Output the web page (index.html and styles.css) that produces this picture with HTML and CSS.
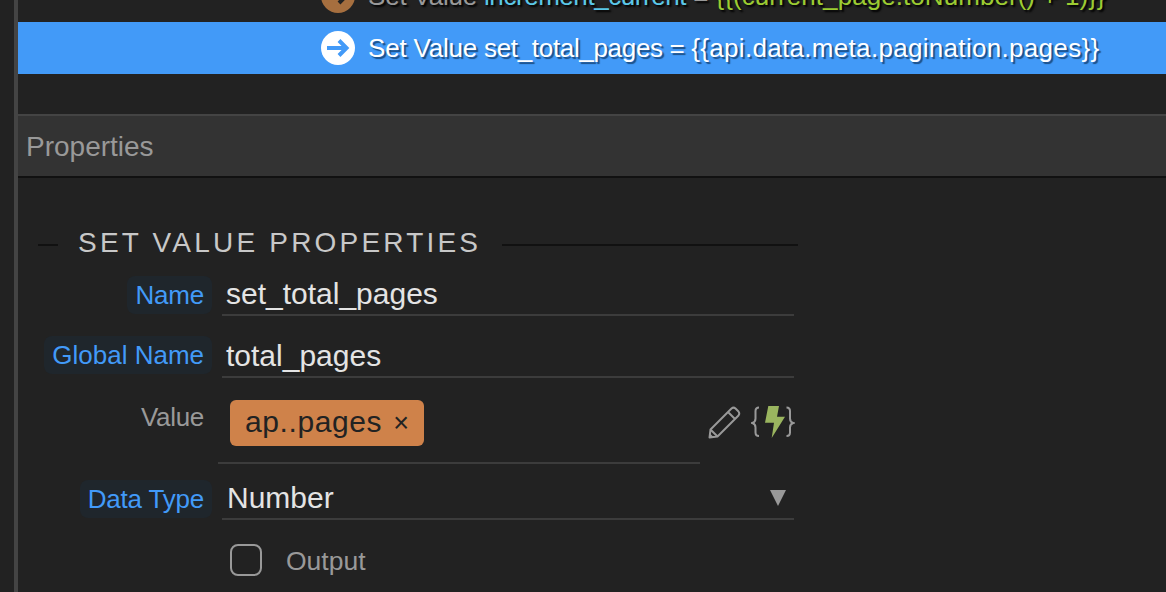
FILE: index.html
```html
<!DOCTYPE html>
<html lang="en">
<head>
<meta charset="utf-8">
<title>Set Value Properties</title>
<link rel="stylesheet" href="styles.css">
</head>
<body>
<div class="app">
  <div class="rail"></div>
  <main class="main">
    <div class="steps">
      <div class="step">
        <svg class="step-icon" viewBox="0 0 34 34"><circle cx="17" cy="17" r="17" fill="#a66f3f"/><path d="M7 17H25M18 10L25 17L18 24" fill="none" stroke="#222" stroke-width="4"/></svg>
        <span class="step-text"><span class="muted verb">Set Value </span><span class="cyan">increment_current</span><span class="muted"> = </span><span class="green">{{(current_page.toNumber() + 1)}}</span></span>
      </div>
      <div class="step step-active">
        <svg class="step-icon" viewBox="0 0 34 34"><circle cx="17" cy="17" r="17" fill="#fff"/><path d="M6 17H25M18 9.500L25.500 17L18 24.500" fill="none" stroke="#429aF8" stroke-width="4"/></svg>
        <span class="step-text"><span class="verb">Set Value </span><span class="target">set_total_pages = </span><span class="expr">{{api.data.meta.pagination.pages}}</span></span>
      </div>
    </div>
    <header class="panel-head">Properties</header>
    <section class="props">
      <div class="legend"><span class="legend-text">SET VALUE PROPERTIES</span></div>
      <div class="field field-name">
        <div class="label-cell"><span class="pill">Name</span></div>
        <div class="input">set_total_pages</div>
      </div>
      <div class="field field-global">
        <div class="label-cell"><span class="pill">Global Name</span></div>
        <div class="input">total_pages</div>
      </div>
      <div class="field field-value">
        <div class="label-cell"><span class="plain-label">Value</span></div>
        <div class="value-box"><span class="tag">ap..pages<span class="tag-x">×</span></span></div>
        <div class="value-tools">
          <svg class="pencil" viewBox="0 0 34 34"><path d="M2.500 31.500L3.500 23.500L24.500 2.500Q26.500 0.800 28.500 2.500L31.500 5.500Q33 7.500 31.500 9.500L10.500 30.500ZM3.500 23.500L10.500 30.500M21 6L28 13" fill="none" stroke="#999" stroke-width="2" stroke-linejoin="round"/><path d="M2.500 31.500L3 27.500L6.500 31Z" fill="#999"/></svg>
          <svg class="dynamic" viewBox="0 0 44 34"><path d="M8 1.500Q4.500 1.500 4.500 5V12.500Q4.500 16 1.300 17Q4.500 18 4.500 21.500V26.500Q4.500 30 8 30M35.500 1.500Q39 1.500 39 5V12.500Q39 16 42.200 17Q39 18 39 21.500V26.500Q39 30 35.500 30" fill="none" stroke="#999" stroke-width="2"/><path d="M17.300 0H28L26 10.700H34L20.700 32L23 16.700H14Z" fill="#9ab55f"/></svg>
        </div>
      </div>
      <div class="field field-type">
        <div class="label-cell"><span class="pill">Data Type</span></div>
        <div class="input select">Number<span class="caret"></span></div>
      </div>
      <div class="field field-check">
        <div class="label-cell"></div>
        <label class="check"><span class="box"></span><span class="check-text">Output</span></label>
      </div>
    </section>
  </main>
</div>
</body>
</html>
```
FILE: styles.css
```css
* { box-sizing: border-box; }
html, body { margin: 0; height: 100%; overflow: hidden; background: #222; }
body { font-family: "Liberation Sans", Arial, sans-serif; color: #eee; }

.app { display: flex; height: 592px; overflow: hidden; }
.rail { width: 18px; flex: none; background: #222; border-right: 4px solid #444; }
.main { flex: 1; min-width: 0; }

.steps { margin-top: -30px; height: 144px; }
.step {
  height: 52px;
  display: flex;
  align-items: center;
  gap: 13px;
  padding-left: 303px;
  font-size: 26px;
  white-space: pre;
  text-shadow: 2px 2px 2px #000;
}
.step-active { background: #429af8; color: #fff; text-shadow: 2px 2px 1px #1c4f86; }
.step-icon { width: 34px; height: 34px; flex: none; }
.muted { color: #999; }
.cyan { color: #5bc8e8; letter-spacing: -0.45px; }
.green { color: #9ccc32; letter-spacing: 0.06px; }
.verb { letter-spacing: -0.2px; }
.target { letter-spacing: -0.33px; }
.expr { letter-spacing: 0.31px; }

.panel-head {
  height: 64px;
  background: #333;
  border-top: 2px solid #444;
  border-bottom: 2px solid #111;
  color: #999;
  font-size: 28px;
  line-height: 62px;
  padding-left: 8px;
}

.props { width: 780px; padding-top: 52px; }
.legend {
  display: flex;
  align-items: center;
  height: 26px;
  margin-left: 20px;
  gap: 20px;
  font-size: 28px;
  letter-spacing: 3.2px;
  color: #c8c8c8;
}
.legend::before, .legend::after { content: ""; height: 2px; background: #111; margin-top: 4px; }
.legend::before { width: 20px; }
.legend::after { flex: 1; }
.legend-text { white-space: nowrap; margin-right: 1px; }

.field { display: flex; }
.label-cell { width: 194px; flex: none; display: flex; justify-content: flex-end; align-items: flex-start; }
.pill {
  height: 38px;
  line-height: 38px;
  padding: 0 8px;
  border-radius: 8px;
  background: #1f262c;
  color: #429af8;
  font-size: 26px;
}
.field-name .pill, .field-type .pill { letter-spacing: -0.2px; }
.plain-label { padding-right: 8px; color: #999; font-size: 26px; letter-spacing: -0.3px; line-height: 34px; }

.input {
  flex: 1;
  margin: 0 4px 0 10px;
  height: 40px;
  border-bottom: 2px solid #3c3c3c;
  padding-left: 4px;
  color: #e4e4e4;
  font-size: 30px;
  line-height: 36px;
}
.field-name { margin-top: 20px; }
.field-global { margin-top: 20px; height: 42px; }
.field-global .input { height: 42px; line-height: 40px; }
.field-value { margin-top: 22px; height: 64px; }
.field-type { margin-top: 16px; }
.field-check { margin-top: 22px; }

.select { position: relative; padding-left: 5px; }
.caret {
  position: absolute;
  right: 8px;
  top: 10px;
  border-left: 8px solid transparent;
  border-right: 8px solid transparent;
  border-top: 16px solid #999;
}

.value-box {
  width: 482px;
  height: 64px;
  margin-left: 6px;
  border-bottom: 2px solid #3c3c3c;
  padding-left: 12px;
}
.tag {
  display: inline-flex;
  align-items: baseline;
  height: 46px;
  width: 194px;
  padding-left: 15px;
  border-radius: 6px;
  background: #cf824a;
  color: #222;
  font-size: 30px;
  letter-spacing: 0.6px;
  line-height: 44px;
  white-space: nowrap;
}
.tag-x { margin-left: 11px; font-size: 27px; letter-spacing: 0; }
.value-tools { display: flex; align-items: flex-start; gap: 10px; margin-left: 7px; padding-top: 6px; }
.pencil { width: 34px; height: 34px; }
.dynamic { width: 44px; height: 34px; }

.check { display: flex; align-items: center; gap: 24px; margin-left: 18px; }
.box { width: 32px; height: 32px; border: 2px solid #999; border-radius: 8px; }
.check-text { font-size: 26.500px; color: #999; margin-top: 4px; }
```
